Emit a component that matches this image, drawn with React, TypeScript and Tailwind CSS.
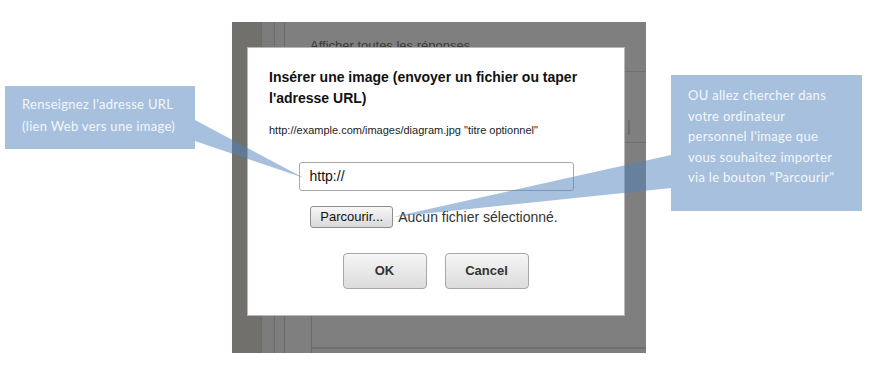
import React from 'react';

const arial = { fontFamily: '"Liberation Sans", Arial, sans-serif' };
const calibri = { fontFamily: 'Lato, "Open Sans", sans-serif' };

function Callout({ className, lines }: { className: string; lines: string[] }) {
  return (
    <div className={`absolute bg-[rgba(79,129,189,0.5)] text-[13px] tracking-[0.3px] text-[#f4f7fb] ${className}`} style={calibri}>
      {lines.map(line => (
        <div key={line}>{line}</div>
      ))}
    </div>
  );
}

function Dialog() {
  return (
    <div
      className="absolute left-[15px] top-[25px] w-[378px] h-[269px] bg-white border border-[#b8b8b8] flex flex-col text-[#222]"
      style={arial}
    >
      <div className="pl-[21px] pt-[19px] pr-4 text-[14px] leading-[21px] font-bold text-[#111]">
        Insérer une image (envoyer un fichier ou taper l'adresse URL)
      </div>
      <div className="pl-[21px] mt-[14px] text-[11px] leading-[14px] text-[#222]">
        http://example.com/images/diagram.jpg "titre optionnel"
      </div>

      {/* url field */}
      <div className="self-center mt-[25px] w-[275px] h-[29px] rounded-[3px] border border-[#a9a9a9] flex items-center pl-[10px] text-[14px] text-[#111]">
        http://
      </div>

      {/* file input */}
      <div className="self-center mt-[15px] flex items-center gap-[5px] pr-[4px]">
        <div className="w-[83px] h-[22px] rounded-[3px] border border-[#8e8e8e] bg-gradient-to-b from-[#f7f7f7] to-[#d9d9d9] flex items-center justify-center text-[13px] text-[#111]">
          Parcourir...
        </div>
        <span className="text-[14px] text-[#333]">Aucun fichier sélectionné.</span>
      </div>

      {/* actions */}
      <div className="self-center mt-[25px] flex gap-[18px] pr-px">
        <div className="w-[84px] h-[36px] rounded-[4px] border border-[#a8a8a8] bg-gradient-to-b from-[#f5f5f5] to-[#dcdcdc] flex items-center justify-center text-[13px] font-bold text-[#333]">
          OK
        </div>
        <div className="w-[84px] h-[36px] rounded-[4px] border border-[#a8a8a8] bg-gradient-to-b from-[#f5f5f5] to-[#dcdcdc] flex items-center justify-center text-[13px] font-bold text-[#333]">
          Cancel
        </div>
      </div>
    </div>
  );
}

export default function App() {
  return (
    <div className="relative w-[870px] h-[367px] bg-white overflow-hidden pt-[22px] pl-[232px]">
      {/* dimmed page behind the modal */}
      <div className="relative w-[414px] h-[331px] flex bg-[#7f7f7f]">
        <div className="w-[29px] bg-[#72706d]" />
        <div className="w-[13px] bg-[#7b7b7b] border-l border-[#6b6b6b]" />
        <div className="w-[10px] bg-[#7d7d7d] border-l border-[#6b6b6b]" />
        <div className="flex-1 flex flex-col border-l border-[#6b6b6b]">
          <div className="pl-[25px] pt-[14px] h-[49px] text-[13px] text-[#3a3a3a]" style={arial}>
            Afficher toutes les réponses
          </div>
          <div className="h-[71px] border-t border-[#6f6f6f] flex justify-end">
            <div className="mt-[48px] mr-[16px] w-[2px] h-[15px] bg-[#6c6c6c]" />
          </div>
          <div className="flex-1 border-t border-[#6f6f6f]" />
          <div className="ml-[26px] h-[37px] border-l border-[#6b6b6b] flex flex-col justify-end">
            <div className="h-[6px] border-t-2 border-[#6f6f6f]" />
          </div>
        </div>
        <Dialog />
      </div>

      {/* annotation callouts */}
      <Callout
        className="left-[5px] top-[86px] w-[190px] h-[63px] pl-[17px] pt-[7px] leading-[22px]"
        lines={["Renseignez l'adresse URL", '(lien Web vers une image)']}
      />
      <Callout
        className="left-[671px] top-[75px] w-[191px] h-[136px] pl-[17px] pt-[10px] leading-[20.5px]"
        lines={[
          'OU allez chercher dans',
          'votre ordinateur',
          "personnel l'image que",
          'vous souhaitez importer',
          'via le bouton "Parcourir"',
        ]}
      />
      <svg className="absolute inset-0 pointer-events-none" width="870" height="367" viewBox="0 0 870 367">
        <polygon points="195,120 304,178 195,141" fill="rgba(79,129,189,0.5)" />
        <polygon points="671,155 393,217 671,188" fill="rgba(79,129,189,0.5)" />
      </svg>
    </div>
  );
}
